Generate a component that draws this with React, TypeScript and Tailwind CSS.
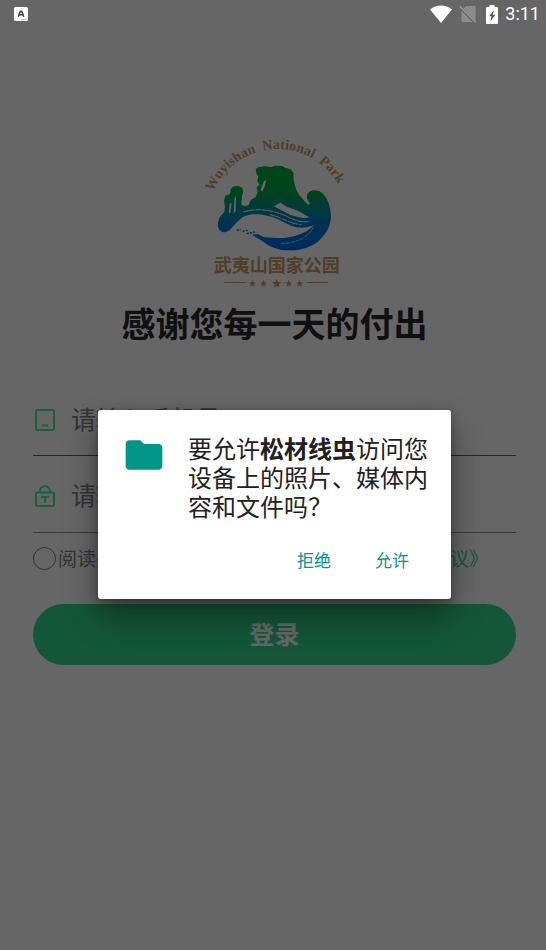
import React from "react";

const CJK = "font-['Noto_Sans_CJK_SC',sans-serif]";

function StatusBar() {
  return (
    <header className="relative z-20 flex h-7 items-center justify-between pl-3.5 pr-1.5 text-white">
      <svg viewBox="0 0 14 14" className="size-3.5" aria-hidden="true">
        <rect width="14" height="14" rx="1.5" fill="#fff" />
        <path d="M4.2 9.8 6.3 4.2h1.4l2.1 5.6M5.2 7.8h3.6" fill="none" stroke="#444" strokeWidth="1.6" />
        <path d="M7.5 12.6h5" stroke="#999" strokeWidth="1" strokeDasharray="1 .5" />
      </svg>
      <div className="flex items-center">
        <svg viewBox="0 0 22 18" className="h-[18px] w-[22px]" aria-hidden="true">
          <path d="M0 4.600C6-.8 16-.8 22 4.600L11 18Z" fill="#fff" />
        </svg>
        <svg viewBox="0 0 18 20" className="ml-[7px] h-5 w-[18px]" aria-hidden="true">
          <path d="M7 2h8.500q1 0 1 1v15h-13q-1 0-1-1V6.500Z" fill="#8c8c8c" />
          <path d="M.5 2.500 17 19.500" stroke="#666" strokeWidth="3" />
          <path d="M.8 2.200 16.800 18.600" stroke="#999" strokeWidth="1.400" />
        </svg>
        <svg viewBox="0 0 12 19" className="ml-[9px] h-[19px] w-3" aria-hidden="true">
          <path d="M3.500 0h5v2H11q1 0 1 1v15q0 1-1 1H1q-1 0-1-1V3q0-1 1-1h2.500Z" fill="#fff" />
          <path d="M8 5 3 11.200h2.600L4.400 16.500 9.400 9.800H6.700Z" fill="#555" />
        </svg>
        <span className="ml-[7px] font-['Roboto',sans-serif] text-lg leading-7">3:11</span>
      </div>
    </header>
  );
}

const STAR = "M0-10 2.500-3.200 9.500-3.100 4 1.200 5.900 8.100 0 4.200-5.900 8.100-4 1.200-9.500-3.100-2.500-3.200Z";

function Logo() {
  return (
    <svg viewBox="0 0 480 495" className="h-[165px] w-40" role="img" aria-label="武夷山国家公园">
      <defs>
        <linearGradient id="ridge" gradientUnits="userSpaceOnUse" x1="0" y1="108" x2="0" y2="360">
          <stop offset="0" stopColor="#00b038" />
          <stop offset=".33" stopColor="#00a84c" />
          <stop offset=".62" stopColor="#0084c4" />
          <stop offset="1" stopColor="#0068f0" />
        </linearGradient>
        <path id="arc" d="M54 186A210 210 0 0 1 454 228" />
      </defs>
      <g fill="#c89a60">
        <text className="font-['Liberation_Serif',serif] text-[42px] font-bold">
          <textPath href="#arc">Wuyishan&#160; National&#160; Park</textPath>
        </text>
        <text x="245" y="425" textAnchor="middle" className="font-['Noto_Sans_CJK_SC',sans-serif] text-[54px] font-bold">
          武夷山国家公园
        </text>
        <path d="M88 456h64v3H88zM336 456h63v3h-63z" />
        <path d={STAR} transform="translate(172 461) scale(1.150)" />
        <path d={STAR} transform="translate(206 461) scale(1.150)" />
        <path d={STAR} transform="translate(245 461) scale(1.500)" />
        <path d={STAR} transform="translate(281 461) scale(1.150)" />
        <path d={STAR} transform="translate(314 461) scale(1.150)" />
      </g>
      <path
        fill="url(#ridge)"
        d="M182 118 190 112 207 109 228 111 240 107 262 108 269 113 287 118 296 130 295 145 301 170C306 192 322 205 340 225L345 219C330 207 333 184 356 181C388 178 409 222 408 262C404 318 352 366 278 361C246 360 224 350 205 335L188 325 170 314 188 312 207 322 232 323C270 329 335 315 357 284C344 292 318 296 300 291C275 284 250 262 215 257C180 248 148 254 137 266C120 278 108 303 90 307C73 306 66 292 69 275L74 262 88 246 90 230 87 212 91 197 105 192 107 178 114 170 127 167 142 173 145 184 141 197 139 224 150 229 161 225 168 209 182 201 188 186 185 172 194 164 187 154 190 140 184 130Z"
      />
      <path fill="#fff" d="M237 229 256 218 277 231 309 242 343 262 325 265 286 255Z" />
      <path fill="#fff" d="M207 153 214 150 209 170 201 185 197 178ZM104 222 110 217 106 248 101 250ZM118 208 123 195 122 244 116 249Z" />
      <path d="M145 246C195 230 245 245 275 259S315 277 345 275M225 254C270 265 280 280 320 284" fill="none" stroke="#fff" strokeWidth="3" strokeDasharray="34 3 17 2" />
      <path d="M258 340C305 342 345 318 357 288" fill="none" stroke="#fff" strokeWidth="2" strokeDasharray="26 4 12 2" />
      <path d="M125 301 137 298M143 304 158 301M155 311 180 306" stroke="#0070c8" strokeWidth="4" strokeDasharray="7 3" />
    </svg>
  );
}

function TabletIcon() {
  return (
    <svg viewBox="0 0 20 22" className="h-[22px] w-5 shrink-0" fill="none" stroke="#40f0a0" strokeWidth="2" aria-hidden="true">
      <rect x="1" y="1" width="18" height="20" rx="1.500" />
      <path d="M6.500 16.500h7" />
    </svg>
  );
}

function LockIcon() {
  return (
    <svg viewBox="0 0 20 22" className="h-[22px] w-5 shrink-0" fill="none" stroke="#40f0a0" strokeWidth="2" aria-hidden="true">
      <rect x="1" y="7.500" width="18" height="13.500" rx="1.500" />
      <path d="M5 7.500V6C5-.2 15-.2 15 6V7.500M6 12h8M10 12v6" />
    </svg>
  );
}

function Field({ id, label, type, icon, className }: { id: string; label: string; type: string; icon: React.ReactNode; className: string }) {
  return (
    <div className={`flex items-center gap-4 border-b pl-0.5 ${className}`}>
      <label htmlFor={id} aria-label={label}>{icon}</label>
      <input
        id={id}
        type={type}
        placeholder={label}
        className="mb-1 h-9 min-w-0 flex-1 bg-transparent text-[25px] leading-9 outline-none placeholder:text-[#808088]"
      />
    </div>
  );
}

function PermissionDialog() {
  return (
    <div className="absolute inset-0 z-10 flex items-center bg-black/60 pl-[98px] pr-[95px] pt-[59px]">
      <section
        role="dialog"
        aria-modal="true"
        aria-labelledby="permission"
        className="w-full rounded-[3px] bg-white pb-[21px] pl-6 pr-3 pt-[23px] shadow-[0_16px_32px_rgba(0,0,0,0.4),0_2px_8px_rgba(0,0,0,0.3)]"
      >
        <div className="flex items-start gap-[22px]">
          <svg viewBox="0 0 24 24" className="size-11 shrink-0" fill="#009688" aria-hidden="true">
            <path d="M10 4H4c-1.100 0-2 .9-2 2v12c0 1.100.9 2 2 2h16c1.100 0 2-.9 2-2V8c0-1.100-.9-2-2-2h-8z" />
          </svg>
          <p id="permission" className="text-2xl leading-[29px] text-[#212121]">
            要允许<b>松材线虫</b>访问您设备上的照片、媒体内容和文件吗？
          </p>
        </div>
        <div className="mt-[22px] flex justify-end gap-3 pr-3.5 text-[17px] text-[#009688]">
          <button type="button" className="h-9 px-4">拒绝</button>
          <button type="button" className="h-9 px-4">允许</button>
        </div>
      </section>
    </div>
  );
}

export default function App() {
  return (
    <div className={`relative min-h-screen bg-white ${CJK}`}>
      <StatusBar />
      <main className="flex flex-col pl-[33px] pr-[30px] pt-[102px]">
        <div className="flex justify-center">
          <Logo />
        </div>
        <h1 className="mt-[3px] text-center text-[34px] font-bold leading-[50px] text-[#282828]">感谢您每一天的付出</h1>
        <form className="flex flex-col">
          <Field id="phone" type="tel" label="请输入手机号" icon={<TabletIcon />} className="mt-[37px] h-[71px] border-[#606060]" />
          <Field id="password" type="password" label="请输入密码" icon={<LockIcon />} className="h-[77px] border-[#909090] pt-1" />
          <div className="mt-[11px] flex h-7 items-center whitespace-nowrap text-[19px] leading-7 text-[#808088]">
            <input id="agree" type="checkbox" className="mr-0.5 size-[23px] appearance-none rounded-full border border-[#808080]" />
            <label htmlFor="agree">阅读并同意</label>
            <a href="#service" className="ml-1.5 text-[#38d68e]">《用户服务协议》</a>
            <span>和</span>
            <a href="#privacy" className="ml-1.5 text-[#38d68e]">《用户隐私协议》</a>
          </div>
          <button type="button" className="mt-8 h-[61px] rounded-full bg-[#32d890] pb-0.5 text-[25px] font-bold text-white">登录</button>
        </form>
      </main>
      <PermissionDialog />
    </div>
  );
}
